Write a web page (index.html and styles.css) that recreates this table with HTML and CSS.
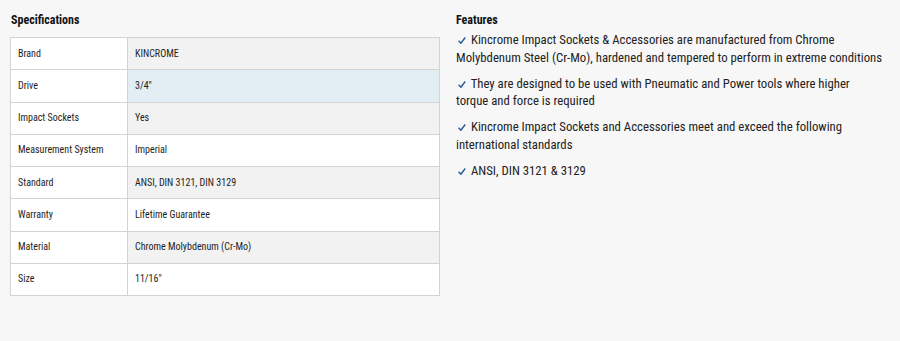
FILE: index.html
```html
<!DOCTYPE html>
<html>
<head>
<meta charset="utf-8">
<link rel="stylesheet" href="styles.css">
</head>
<body>
<div class="page">
  <section class="specs">
    <h3 class="title">Specifications</h3>
    <table class="spec-table">
      <tr><td class="lbl">Brand</td><td class="val">KINCROME</td></tr>
      <tr class="hl"><td class="lbl">Drive</td><td class="val">3/4"</td></tr>
      <tr><td class="lbl">Impact Sockets</td><td class="val">Yes</td></tr>
      <tr><td class="lbl">Measurement System</td><td class="val">Imperial</td></tr>
      <tr><td class="lbl">Standard</td><td class="val">ANSI, DIN 3121, DIN 3129</td></tr>
      <tr><td class="lbl">Warranty</td><td class="val">Lifetime Guarantee</td></tr>
      <tr><td class="lbl">Material</td><td class="val">Chrome Molybdenum (Cr-Mo)</td></tr>
      <tr><td class="lbl">Size</td><td class="val">11/16"</td></tr>
    </table>
  </section>
  <section class="features">
    <h3 class="title">Features</h3>
    <p class="item"><svg class="tick" viewBox="0 0 8 7" width="8" height="7"><path d="M0.6 3.8 L2.9 6.2 L7.2 0.5"/></svg> Kincrome Impact Sockets &amp; Accessories are manufactured from Chrome Molybdenum Steel (Cr-Mo), hardened and tempered to perform in extreme conditions</p>
    <p class="item"><svg class="tick" viewBox="0 0 8 7" width="8" height="7"><path d="M0.6 3.8 L2.9 6.2 L7.2 0.5"/></svg> They are designed to be used with Pneumatic and Power tools where higher torque and force is required</p>
    <p class="item"><svg class="tick" viewBox="0 0 8 7" width="8" height="7"><path d="M0.6 3.8 L2.9 6.2 L7.2 0.5"/></svg> Kincrome Impact Sockets and Accessories meet and exceed the following international standards</p>
    <p class="item"><svg class="tick" viewBox="0 0 8 7" width="8" height="7"><path d="M0.6 3.8 L2.9 6.2 L7.2 0.5"/></svg> ANSI, DIN 3121 &amp; 3129</p>
  </section>
</div>
</body>
</html>
```
FILE: styles.css
```css
html, body {
  margin: 0;
  padding: 0;
  background: #f7f7f7;
}
body {
  font-family: "Roboto Condensed", "Liberation Sans", sans-serif;
  color: #222;
}
.page {
  display: flex;
  gap: 16px;
  padding: 12px 10px 0 10px;
}
.specs {
  width: 430px;
  flex: none;
}
.title {
  margin: 0;
  font-size: 12px;
  font-weight: bold;
  color: #111;
  line-height: 16px;
}
.specs .title {
  padding-left: 1px;
  margin-bottom: 9px;
}
.spec-table {
  width: 430px;
  border-collapse: collapse;
  background: #fff;
  font-size: 10px;
  color: #1e1e1e;
}
.spec-table td {
  border: 1px solid #d3d3d3;
  height: 32.25px;
  padding: 0 7px;
  line-height: 14px;
  box-sizing: border-box;
}
.spec-table .lbl {
  width: 117px;
  background: #fff;
}
.spec-table tr:nth-child(odd) .val {
  background: #f2f2f2;
}
.spec-table tr.hl .val {
  background: #e2edf4;
}
.features {
  width: 428px;
  flex: none;
}
.features .title {
  margin-bottom: 3px;
}
.item {
  margin: 0 0 8.5px 0;
  font-size: 12.75px;
  line-height: 17.5px;
  color: #222;
}
.tick {
  fill: none;
  stroke: #2c5c9b;
  stroke-width: 1.5;
  margin-left: 2px;
  margin-right: 2px;
  vertical-align: 0;
}
```
